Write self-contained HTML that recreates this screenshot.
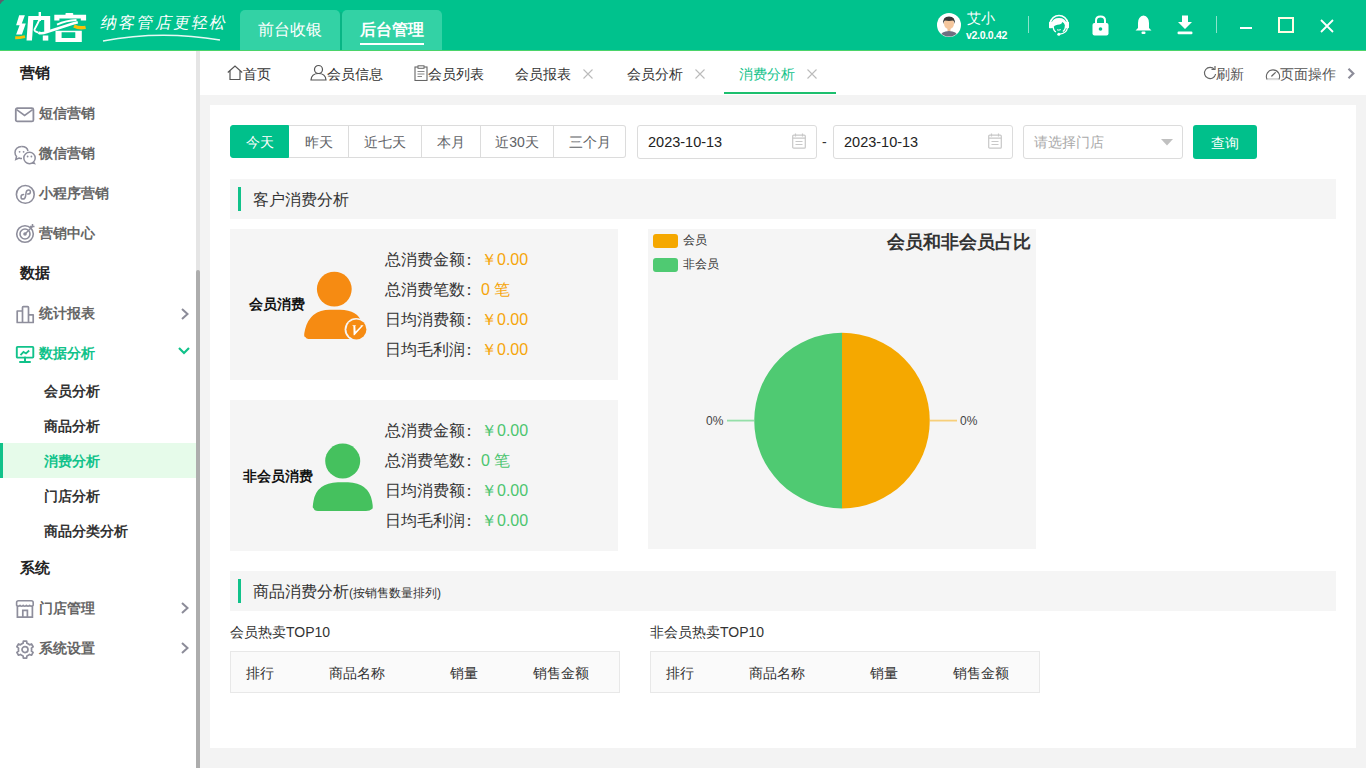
<!DOCTYPE html>
<html><head><meta charset="utf-8">
<style>
*{margin:0;padding:0;box-sizing:border-box}
html,body{width:1366px;height:768px;overflow:hidden;background:#f3f3f3;font-family:"Liberation Sans",sans-serif;color:#333}
.a{position:absolute;white-space:nowrap}
#hdr{left:0;top:0;width:1366px;height:50px;background:#00c28d}
#hdrline{left:0;top:50px;width:1366px;height:1px;background:#4bd46a}
.htab{top:10px;width:100px;height:40px;background:#33d2a5;border-radius:5px 5px 0 0;color:#fff;font-size:16px;text-align:center;line-height:40px}
#side{left:0;top:51px;width:196px;height:717px;background:#fff}
#strack{left:196px;top:51px;width:4px;height:717px;background:#e5e5e5}
#sthumb{left:196px;top:270px;width:4px;height:498px;background:#adadad;border-radius:2px 2px 0 0}
.sh{left:20px;font-size:15px;font-weight:bold;color:#222;line-height:20px}
.si{left:39px;font-size:14px;font-weight:bold;color:#666;line-height:20px}
.ss{left:44px;font-size:14px;font-weight:bold;color:#333;line-height:20px}
.ico{left:14px;width:22px;height:22px}
#tabbar{left:200px;top:51px;width:1166px;height:44px;background:#fff}
.tb{top:64px;font-size:14px;color:#333;line-height:20px}
#panel{left:210px;top:105px;width:1146px;height:643px;background:#fff}
.rb{top:125px;height:33px;border:1px solid #dcdcdc;border-left:none;font-size:14px;color:#606266;text-align:center;line-height:33px;background:#fff}
.inp{top:125px;height:34px;border:1px solid #dcdcdc;border-radius:3px;background:#fff}
.sec{left:230px;width:1106px;height:40px;background:#f5f5f5}
.secbar{left:8px;top:8px;width:3px;height:24px;background:#11c28a}
.card{left:230px;width:388px;background:#f5f5f5}
.lbl{font-size:16px;color:#333;line-height:20px}
.val{color:#f5a50a}
.valg{color:#4cc56f}
.tbl{top:651px;width:390px;height:42px;background:#fafafa;border:1px solid #e8e8e8}
.th{top:13px;font-size:14px;color:#333;line-height:16px}
</style></head><body>

<!-- header -->
<div id="hdr" class="a"></div>
<div id="hdrline" class="a"></div>
<div class="a htab" style="left:240px">前台收银</div>
<div class="a" style="left:340px;top:12px;width:2px;height:38px;background:#08b585"></div>
<div class="a htab" style="left:342px;font-weight:bold">后台管理</div>
<div class="a" style="left:360px;top:43px;width:64px;height:2px;background:#fff"></div>
<!-- window corner -->
<svg class="a" style="left:0;top:0" width="5" height="5"><path d="M0 0 H4 L3.6 0.8 Q1.5 1.5 0.9 3.6 L0 4Z" fill="#5e5e6c"/></svg>
<!-- logo -->
<svg class="a" style="left:0;top:0" width="96" height="50" viewBox="0 0 96 50">
<g fill="#fff">
<path d="M19.2 15.3 H24.9 L21.8 23.6 H25.8 L21.9 34.6 H16.1 L19.6 25.2 H16.1Z"/>
<path d="M28.3 16 H33.6 L32 40.6 H26.5Z"/>
<path d="M33 16 H50.2 V31.8 H44.2 V20 H33Z"/>
<path d="M42.8 35.5 H48.3 V40.6 H42.8Z"/>
<path d="M54.3 14.8 H86.1 V20.6 H80.8 V18.4 H59.4 V20.6 H54.3Z"/>
<rect x="65.4" y="12.9" width="7.9" height="2.4" rx="1"/>
<path d="M55.5 30.8 H81.8 V41.9 H55.5Z M61.6 32.2 V38.1 H75.3 V32.2Z" fill-rule="evenodd"/>
</g>
<path d="M39.8 19 Q37 25 34.5 29.5 Q34 31.5 38.5 32.6" stroke="#fff" stroke-width="1.8" fill="none"/>
<path d="M39.8 12 V21" stroke="#fff" stroke-width="2.4"/>
<path d="M38.5 32.6 Q41 34.2 46.9 32 L65.4 26 Q73 23.5 77.8 22.2" stroke="#fff" stroke-width="2.6" fill="none"/>
<path d="M57 24.6 Q66 20.5 76.5 20" stroke="#fff" stroke-width="2" fill="none"/>
<path d="M15.2 37.8 Q19 37.8 25 36.6" stroke="#f8c009" stroke-width="3" fill="none"/>
<path d="M74 26 Q79 28.5 85.6 27.3" stroke="#f8c009" stroke-width="3.4" fill="none"/>
</svg>
<div class="a" style="left:101px;top:13px;font-size:16px;color:#fff;line-height:20px;letter-spacing:2.2px;transform:skewX(-12deg);font-weight:200">纳客管店更轻松</div>
<svg class="a" style="left:100px;top:32px" width="125" height="12"><path d="M3 9 Q60 -2 120 8" stroke="#fff" stroke-width="1.5" fill="none" opacity=".9"/></svg>

<!-- user -->
<svg class="a" style="left:937px;top:13px" width="24" height="24" viewBox="0 0 24 24">
<circle cx="12" cy="12" r="12" fill="#fff"/>
<clipPath id="cc"><circle cx="12" cy="12" r="11.5"/></clipPath>
<g clip-path="url(#cc)">
<path d="M2.5 25 Q3.5 18.2 12 18 Q20.5 18.2 21.5 25Z" fill="#6f6f80"/>
<rect x="10.5" y="14" width="3" height="4" fill="#f0c097"/>
<ellipse cx="12" cy="10.5" rx="5" ry="5.5" fill="#f4c69d"/>
<path d="M6.2 11 Q5.5 3.6 12 3.6 Q18.5 3.6 17.8 11 Q17 8 16 7.6 Q12 8.2 8 7.6 Q7 8 6.2 11Z" fill="#383838"/>
</g></svg>
<div class="a" style="left:967px;top:10px;font-size:14px;color:#fff;line-height:16px">艾小</div>
<div class="a" style="left:966px;top:29px;font-size:10.5px;font-weight:bold;color:#fff;line-height:12px;letter-spacing:-0.3px">v2.0.0.42</div>
<div class="a" style="left:1028px;top:16px;width:1px;height:17px;background:rgba(255,255,255,.55)"></div>
<!-- headset -->
<svg class="a" style="left:1044px;top:10px" width="30" height="30" viewBox="0 0 30 30">
<path d="M6.2 13 A8.9 8.9 0 0 1 23.8 13" stroke="#fff" stroke-width="1.5" fill="none"/>
<rect x="5" y="11.8" width="3.2" height="6.4" rx="0.8" fill="#fff"/>
<rect x="21.8" y="11.8" width="3.2" height="6.4" rx="0.8" fill="#fff"/>
<path d="M7.6 18 V13.5 Q8.3 8 15 8 Q21.7 8 22.4 13.5 V18 Q21.6 17 21 15.5 Q20.3 12.5 18.3 12 Q17.8 14 15.5 14.6 Q11 15 10 16.5 Q9 18 8 18Z" fill="#fff"/>
<path d="M9.2 17 Q9.5 21 12 21.8 M21.5 15.5 Q21.5 20 18.8 21.5" stroke="#fff" stroke-width="1.4" fill="none"/>
<path d="M13 19.8 Q14.8 20.6 16.8 19.6" stroke="#fff" stroke-width="1" fill="none"/>
<path d="M23.4 18 Q22.6 23.2 15.5 24.2" stroke="#fff" stroke-width="1.3" fill="none"/>
<circle cx="14.8" cy="24.2" r="1.5" fill="#fff"/>
</svg>
<!-- lock -->
<svg class="a" style="left:1092px;top:15px" width="17" height="21" viewBox="0 0 17 21">
<path d="M4 9 V5.5 Q4 1.5 8.5 1.5 Q13 1.5 13 5.5 V9" stroke="#fff" stroke-width="2" fill="none"/>
<rect x="0.5" y="8" width="16" height="12.5" rx="2" fill="#fff"/>
<circle cx="8.5" cy="14" r="1.8" fill="#00c28d"/>
</svg>
<!-- bell -->
<svg class="a" style="left:1135px;top:15px" width="17" height="20" viewBox="0 0 17 20">
<path d="M8.5 0.5 Q14 1.5 14 8 V13 L16.5 15.5 H0.5 L3 13 V8 Q3 1.5 8.5 0.5Z" fill="#fff"/>
<rect x="6.5" y="16.5" width="4" height="2.5" rx="1" fill="#fff"/>
</svg>
<!-- download -->
<svg class="a" style="left:1177px;top:15px" width="16" height="20" viewBox="0 0 16 20">
<path d="M5 0.5 H11 V7 H15 L8 14 L1 7 H5Z" fill="#fff"/>
<rect x="0.5" y="16.5" width="15" height="2.8" rx="1.2" fill="#fff"/>
</svg>
<div class="a" style="left:1216px;top:16px;width:1px;height:17px;background:rgba(255,255,255,.55)"></div>
<!-- window controls -->
<div class="a" style="left:1240px;top:27px;width:12px;height:2px;background:#fff"></div>
<div class="a" style="left:1278px;top:17px;width:16px;height:16px;border:2px solid #fffde3"></div>
<svg class="a" style="left:1320px;top:19px" width="14" height="14" viewBox="0 0 14 14"><path d="M1 1 L13 13 M13 1 L1 13" stroke="#fff" stroke-width="1.8"/></svg>

<!-- sidebar -->
<div id="side" class="a"></div>
<div id="strack" class="a"></div>
<div id="sthumb" class="a"></div>
<div class="a sh" style="top:63px">营销</div>
<div class="a si" style="top:103px">短信营销</div>
<div class="a si" style="top:143px">微信营销</div>
<div class="a si" style="top:183px">小程序营销</div>
<div class="a si" style="top:223px">营销中心</div>
<div class="a sh" style="top:263px">数据</div>
<div class="a si" style="top:303px">统计报表</div>
<div class="a si" style="top:343px;color:#11c28a">数据分析</div>
<div class="a ss" style="top:381px">会员分析</div>
<div class="a ss" style="top:416px">商品分析</div>
<div class="a" style="left:0;top:443px;width:196px;height:35px;background:#e6fbea"></div>
<div class="a" style="left:0;top:443px;width:3px;height:35px;background:#11c28a"></div>
<div class="a ss" style="top:451px;color:#11c28a">消费分析</div>
<div class="a ss" style="top:486px">门店分析</div>
<div class="a ss" style="top:521px">商品分类分析</div>
<div class="a sh" style="top:558px">系统</div>
<div class="a si" style="top:598px">门店管理</div>
<div class="a si" style="top:638px">系统设置</div>
<!-- sidebar icons -->
<svg class="a" style="left:14px;top:106px" width="22" height="18" viewBox="0 0 22 18"><rect x="1.8" y="2.2" width="17.6" height="13.2" rx="1.5" stroke="#8e8e9c" stroke-width="1.8" fill="none"/><path d="M2.6 3.6 L10.6 9.4 L18.6 3.6" stroke="#8e8e9c" stroke-width="1.6" fill="none"/></svg>
<svg class="a" style="left:12px;top:144px" width="26" height="22" viewBox="0 0 26 22"><path d="M9.7 2.5 C5.5 2.5 3 5.3 3 8.5 C3 10.5 3.8 11.8 4.5 12.5 L3.8 15.5 L7 14 C8 14.4 9 14.6 10 14.6" stroke="#8e8e9c" stroke-width="1.5" fill="none"/><path d="M9.7 2.5 C13.3 2.5 15.5 4.5 16 7" stroke="#8e8e9c" stroke-width="1.5" fill="none"/><circle cx="17.5" cy="14" r="5.7" stroke="#8e8e9c" stroke-width="1.5" fill="#fff"/><path d="M21.5 18 L22.6 19.6 L20 19" stroke="#8e8e9c" stroke-width="1.3" fill="none"/><circle cx="7.6" cy="7.8" r=".9" fill="#8e8e9c"/><circle cx="11.6" cy="7.8" r=".9" fill="#8e8e9c"/><circle cx="15.6" cy="12.5" r=".9" fill="#8e8e9c"/><circle cx="19.4" cy="12.5" r=".9" fill="#8e8e9c"/></svg>
<svg class="a" style="left:14px;top:182px" width="22" height="24" viewBox="0 0 22 24"><circle cx="11.3" cy="12.4" r="8.9" stroke="#8e8e9c" stroke-width="1.6" fill="none"/><path d="M9.6 12.6 C7.8 12.6 7 13.8 7 14.9 C7 16.2 8 17 9.1 17 C10.6 17 11.2 16 11.5 14.5 L12.1 10.6 C12.4 9 13.2 7.9 14.6 7.9 C15.8 7.9 16.4 8.8 16.4 9.9 C16.4 11.1 15.5 12.1 13.6 12.1" stroke="#8e8e9c" stroke-width="1.5" fill="none" stroke-linecap="round"/></svg>
<svg class="a" style="left:14px;top:222px" width="22" height="22" viewBox="0 0 22 22"><circle cx="11" cy="12" r="8.3" stroke="#8e8e9c" stroke-width="1.6" fill="none"/><circle cx="11" cy="12" r="5" stroke="#8e8e9c" stroke-width="1.6" fill="none"/><circle cx="11" cy="12" r="1.8" fill="#8e8e9c"/><path d="M11 12 L18.5 4.5" stroke="#8e8e9c" stroke-width="1.5"/><path d="M16 4.5 L18.5 4.5 L18.5 2 M18.5 4.5 L20.5 4.5" stroke="#8e8e9c" stroke-width="1.5" fill="none"/></svg>
<svg class="a" style="left:14px;top:302px" width="22" height="22" viewBox="0 0 22 22"><path d="M3.2 20.5 V9 H8.5 V20.5Z M8.5 20.5 V5.5 Q8.5 4.6 9.4 4.6 H13.6 Q14.5 4.6 14.5 5.5 V20.5Z M14.5 20.5 V12.8 H19.2 V20.5Z" stroke="#8e8e9c" stroke-width="1.7" fill="none" stroke-linejoin="round"/></svg>
<svg class="a" style="left:14px;top:342px" width="22" height="22" viewBox="0 0 22 22"><rect x="2.8" y="4.9" width="16.5" height="10.7" rx="0.8" stroke="#11c28a" stroke-width="1.9" fill="none"/><path d="M6.5 13.2 L9.5 10 L12 11.5 L15.2 8.5" stroke="#11c28a" stroke-width="1.8" fill="none"/><path d="M11 15.6 V19.8 M6 20 H16" stroke="#11c28a" stroke-width="2" stroke-linecap="round"/></svg>
<svg class="a" style="left:14px;top:597px" width="22" height="22" viewBox="0 0 22 22"><path d="M3.4 9 V20.2 H18.4 V9" stroke="#8e8e9c" stroke-width="1.7" fill="none"/><path d="M4.5 3.8 H17.3 Q19.2 3.8 19.2 5.8 V8.2 Q17.5 10 15.6 8.4 Q14 10 12.4 8.4 Q10.8 10 9.2 8.4 Q7.6 10 6 8.4 Q4.2 10 2.6 8.2 V5.8 Q2.6 3.8 4.5 3.8Z" stroke="#8e8e9c" stroke-width="1.6" fill="none" stroke-linejoin="round"/><path d="M8.8 20.2 V13.4 H13.4 V20.2" stroke="#8e8e9c" stroke-width="1.7" fill="none"/></svg>
<svg class="a" style="left:14px;top:638px" width="22" height="22" viewBox="0 0 22 22"><path d="M7.70 5.88 L9.07 5.29 L9.36 3.16 L12.64 3.16 L12.93 5.29 L14.30 5.88 L15.50 6.77 L17.49 5.96 L19.13 8.80 L17.43 10.12 L17.60 11.60 L17.43 13.08 L19.13 14.40 L17.49 17.24 L15.50 16.43 L14.30 17.32 L12.93 17.91 L12.64 20.04 L9.36 20.04 L9.07 17.91 L7.70 17.32 L6.50 16.43 L4.51 17.24 L2.87 14.40 L4.57 13.08 L4.40 11.60 L4.57 10.12 L2.87 8.80 L4.51 5.96 L6.50 6.77Z" stroke="#8e8e9c" stroke-width="1.7" fill="none" stroke-linejoin="round"/><circle cx="11" cy="11.6" r="3" stroke="#8e8e9c" stroke-width="1.7" fill="none"/></svg>
<!-- chevrons -->
<svg class="a" style="left:180px;top:307px" width="10" height="14" viewBox="0 0 10 14"><path d="M2 2 L7.5 7 L2 12" stroke="#8c8c99" stroke-width="2" fill="none"/></svg>
<svg class="a" style="left:180px;top:601px" width="10" height="14" viewBox="0 0 10 14"><path d="M2 2 L7.5 7 L2 12" stroke="#8c8c99" stroke-width="2" fill="none"/></svg>
<svg class="a" style="left:180px;top:641px" width="10" height="14" viewBox="0 0 10 14"><path d="M2 2 L7.5 7 L2 12" stroke="#8c8c99" stroke-width="2" fill="none"/></svg>
<svg class="a" style="left:177px;top:346px" width="14" height="10" viewBox="0 0 14 10"><path d="M2 2 L7 7 L12 2" stroke="#11c28a" stroke-width="2.2" fill="none"/></svg>

<!-- tabbar -->
<div id="tabbar" class="a"></div>
<svg class="a" style="left:227px;top:65px" width="16" height="16" viewBox="0 0 16 16"><path d="M0.8 7.5 L8 1 L15.2 7.5 M3 6 V14.5 H13 V6" stroke="#555" stroke-width="1.2" fill="none"/></svg>
<div class="a tb" style="left:243px">首页</div>
<svg class="a" style="left:310px;top:64px" width="17" height="17" viewBox="0 0 17 17"><circle cx="8.5" cy="5.5" r="4" stroke="#555" stroke-width="1.2" fill="none"/><path d="M1 16 Q1.5 9.5 8.5 9.5 Q15.5 9.5 16 16Z" stroke="#555" stroke-width="1.2" fill="none"/></svg>
<div class="a tb" style="left:327px">会员信息</div>
<svg class="a" style="left:414px;top:65px" width="14" height="16" viewBox="0 0 14 16"><rect x="1" y="2" width="12" height="13.5" stroke="#666" stroke-width="1.1" fill="none"/><rect x="4" y="0.8" width="6" height="2.5" stroke="#666" stroke-width="1" fill="#fff"/><path d="M3.5 6.5 H10.5 M3.5 9 H10.5 M3.5 11.5 H8" stroke="#888" stroke-width="1"/></svg>
<div class="a tb" style="left:428px">会员列表</div>
<div class="a tb" style="left:515px">会员报表</div>
<svg class="a" style="left:583px;top:69px" width="10" height="10" viewBox="0 0 10 10"><path d="M0.5 0.5 L9.5 9.5 M9.5 0.5 L0.5 9.5" stroke="#bbb" stroke-width="1.1"/></svg>
<div class="a tb" style="left:627px">会员分析</div>
<svg class="a" style="left:695px;top:69px" width="10" height="10" viewBox="0 0 10 10"><path d="M0.5 0.5 L9.5 9.5 M9.5 0.5 L0.5 9.5" stroke="#bbb" stroke-width="1.1"/></svg>
<div class="a tb" style="left:739px;color:#11c28a">消费分析</div>
<svg class="a" style="left:807px;top:69px" width="10" height="10" viewBox="0 0 10 10"><path d="M0.5 0.5 L9.5 9.5 M9.5 0.5 L0.5 9.5" stroke="#bbb" stroke-width="1.1"/></svg>
<div class="a" style="left:724px;top:92px;width:112px;height:2px;background:#1cbf6e"></div>
<svg class="a" style="left:1203px;top:66px" width="14" height="15" viewBox="0 0 14 15"><path d="M11.5 3.5 A5.6 5.6 0 1 0 12.6 8" stroke="#666" stroke-width="1.2" fill="none"/><path d="M8.5 3.5 H12 V0" stroke="#666" stroke-width="1.2" fill="none"/></svg>
<div class="a tb" style="left:1216px;color:#555">刷新</div>
<svg class="a" style="left:1265px;top:66px" width="16" height="15" viewBox="0 0 16 15"><path d="M2 13.2 A6.6 6.6 0 1 1 14 13.2 Z" stroke="#666" stroke-width="1.1" fill="none" stroke-linejoin="round"/><path d="M6.8 10 L10.3 6.6" stroke="#666" stroke-width="1.3" stroke-linecap="round"/><path d="M2.2 13.6 H13.8" stroke="#ddd" stroke-width="1.2"/></svg>
<div class="a tb" style="left:1280px;color:#555">页面操作</div>
<svg class="a" style="left:1346px;top:67px" width="10" height="13" viewBox="0 0 10 13"><path d="M2.5 1.8 L7.3 6.5 L2.5 11.2" stroke="#8c8c99" stroke-width="2.2" fill="none"/></svg>

<!-- panel -->
<div id="panel" class="a"></div>
<!-- filter row -->
<div class="a rb" style="left:230px;width:59px;border:1px solid #00c08b;background:#00c08b;color:#fff;border-radius:3px 0 0 3px;line-height:31px;padding-top:1px">今天</div>
<div class="a rb" style="left:289px;width:60px">昨天</div>
<div class="a rb" style="left:349px;width:73px">近七天</div>
<div class="a rb" style="left:422px;width:59px">本月</div>
<div class="a rb" style="left:481px;width:73px">近30天</div>
<div class="a rb" style="left:554px;width:72px;border-radius:0 3px 3px 0">三个月</div>
<div class="a inp" style="left:637px;width:180px"></div>
<div class="a" style="left:648px;top:133px;font-size:14.5px;color:#222;line-height:18px">2023-10-13</div>
<svg class="a" style="left:792px;top:133px" width="14" height="16" viewBox="0 0 14 16"><rect x="0.7" y="2.2" width="12.6" height="13" rx="1" stroke="#c8c8c8" stroke-width="1.2" fill="none"/><path d="M0.7 5.2 H13.3 M3.5 0.5 V3.5 M10.5 0.5 V3.5 M3.5 8.5 H10.5 M3.5 11.5 H10.5" stroke="#c8c8c8" stroke-width="1.2"/></svg>
<div class="a" style="left:822px;top:133px;font-size:14px;color:#333;line-height:18px">-</div>
<div class="a inp" style="left:833px;width:180px"></div>
<div class="a" style="left:844px;top:133px;font-size:14.5px;color:#222;line-height:18px">2023-10-13</div>
<svg class="a" style="left:988px;top:133px" width="14" height="16" viewBox="0 0 14 16"><rect x="0.7" y="2.2" width="12.6" height="13" rx="1" stroke="#c8c8c8" stroke-width="1.2" fill="none"/><path d="M0.7 5.2 H13.3 M3.5 0.5 V3.5 M10.5 0.5 V3.5 M3.5 8.5 H10.5 M3.5 11.5 H10.5" stroke="#c8c8c8" stroke-width="1.2"/></svg>
<div class="a inp" style="left:1023px;width:160px"></div>
<div class="a" style="left:1034px;top:133px;font-size:14px;color:#aaa;line-height:18px">请选择门店</div>
<svg class="a" style="left:1161px;top:139px" width="12" height="7" viewBox="0 0 12 7"><path d="M0 0 H12 L6 6.5Z" fill="#c0c0c0"/></svg>
<div class="a" style="left:1193px;top:125px;width:64px;height:34px;background:#00c08b;border-radius:3px;color:#fff;font-size:14px;text-align:center;line-height:36px">查询</div>

<!-- section 1 -->
<div class="a sec" style="top:179px"><div class="a secbar"></div><div class="a" style="left:23px;top:11px;font-size:16px;color:#333;line-height:20px">客户消费分析</div></div>

<!-- card 1 -->
<div class="a card" style="top:229px;height:151px">
  <div class="a" style="left:19px;top:67px;font-size:13.5px;font-weight:bold;color:#111;line-height:18px">会员消费</div>
  <div class="a lbl" style="left:155px;top:21px">总消费金额<span style="margin-left:-4px">：</span><span class="a val" style="left:96px;top:0">￥0.00</span></div>
  <div class="a lbl" style="left:155px;top:51px">总消费笔数<span style="margin-left:-4px">：</span><span class="a val" style="left:96px;top:0">0 笔</span></div>
  <div class="a lbl" style="left:155px;top:81px">日均消费额<span style="margin-left:-4px">：</span><span class="a val" style="left:96px;top:0">￥0.00</span></div>
  <div class="a lbl" style="left:155px;top:111px">日均毛利润<span style="margin-left:-4px">：</span><span class="a val" style="left:96px;top:0">￥0.00</span></div>
</div>
<svg class="a" style="left:300px;top:268px" width="72" height="74" viewBox="0 0 72 74">
<circle cx="34.3" cy="21.1" r="17.4" fill="#f68b12"/>
<path d="M5.5 69 Q3 70 5.2 61 Q10 42 30 41.7 H40 Q58 42 62 55 L62 71 H10 Q6 71 5.5 69Z" fill="#f68b12"/>
<circle cx="56" cy="61.5" r="11.4" fill="#f5f5f5"/>
<circle cx="56.4" cy="61.4" r="10" fill="#f68b12"/>
<path d="M52 57.3 H56.2 L55.3 57.9 L55.6 63.6 L61 58 L60.3 57.3 H63.6 L54.5 67.2 H53.6 L53.4 58.3Z" fill="#fff"/>
</svg>

<!-- card 2 -->
<div class="a card" style="top:400px;height:151px">
  <div class="a" style="left:13px;top:68px;font-size:13.5px;font-weight:bold;color:#111;line-height:18px">非会员消费</div>
  <div class="a lbl" style="left:155px;top:21px">总消费金额<span style="margin-left:-4px">：</span><span class="a valg" style="left:96px;top:0">￥0.00</span></div>
  <div class="a lbl" style="left:155px;top:51px">总消费笔数<span style="margin-left:-4px">：</span><span class="a valg" style="left:96px;top:0">0 笔</span></div>
  <div class="a lbl" style="left:155px;top:81px">日均消费额<span style="margin-left:-4px">：</span><span class="a valg" style="left:96px;top:0">￥0.00</span></div>
  <div class="a lbl" style="left:155px;top:111px">日均毛利润<span style="margin-left:-4px">：</span><span class="a valg" style="left:96px;top:0">￥0.00</span></div>
</div>
<svg class="a" style="left:300px;top:440px" width="80" height="74" viewBox="0 0 80 74">
<circle cx="42.7" cy="21" r="17.5" fill="#45c15e"/>
<path d="M13.5 68 Q12 69 13.5 61 Q16.5 43 38 42.3 H48 Q68.5 43 72 61 Q73.5 69 72 69 Q70 71 66 71 H18 Q14 71 13.5 68Z" fill="#45c15e"/>
</svg>

<!-- pie box -->
<div class="a" style="left:648px;top:229px;width:388px;height:320px;background:#f5f5f5"></div>
<div class="a" style="left:653px;top:234px;width:25px;height:14px;border-radius:3px;background:#f5a800"></div>
<div class="a" style="left:683px;top:232px;font-size:12px;color:#333;line-height:16px">会员</div>
<div class="a" style="left:653px;top:258px;width:25px;height:14px;border-radius:3px;background:#4fca72"></div>
<div class="a" style="left:683px;top:256px;font-size:12px;color:#333;line-height:16px">非会员</div>
<div class="a" style="left:887px;top:231px;font-size:18px;font-weight:bold;color:#333;line-height:22px">会员和非会员占比</div>
<svg class="a" style="left:648px;top:229px" width="388" height="320">
<path d="M194 103.8 A87.8 87.8 0 0 1 194 279.4 Z" fill="#f5a800"/>
<path d="M194 103.8 A87.8 87.8 0 0 0 194 279.4 Z" fill="#4fca72"/>
<path d="M281.8 191.6 H309" stroke="#f7cf7a" stroke-width="1.8"/>
<path d="M79 191.6 H106.2" stroke="#95dfa9" stroke-width="1.8"/>
</svg>
<div class="a" style="left:706px;top:413px;font-size:12px;color:#444;line-height:16px">0%</div>
<div class="a" style="left:960px;top:413px;font-size:12px;color:#444;line-height:16px">0%</div>

<!-- section 2 -->
<div class="a sec" style="top:571px"><div class="a secbar"></div><div class="a" style="left:23px;top:11px;font-size:16px;color:#333;line-height:20px">商品消费分析<span style="font-size:12px">(按销售数量排列)</span></div></div>
<div class="a" style="left:230px;top:624px;font-size:14px;color:#333;line-height:16px">会员热卖TOP10</div>
<div class="a" style="left:650px;top:624px;font-size:14px;color:#333;line-height:16px">非会员热卖TOP10</div>
<div class="a tbl" style="left:230px">
  <div class="a th" style="left:15px">排行</div><div class="a th" style="left:98px">商品名称</div><div class="a th" style="left:219px">销量</div><div class="a th" style="left:302px">销售金额</div>
</div>
<div class="a tbl" style="left:650px">
  <div class="a th" style="left:15px">排行</div><div class="a th" style="left:98px">商品名称</div><div class="a th" style="left:219px">销量</div><div class="a th" style="left:302px">销售金额</div>
</div>

</body></html>
